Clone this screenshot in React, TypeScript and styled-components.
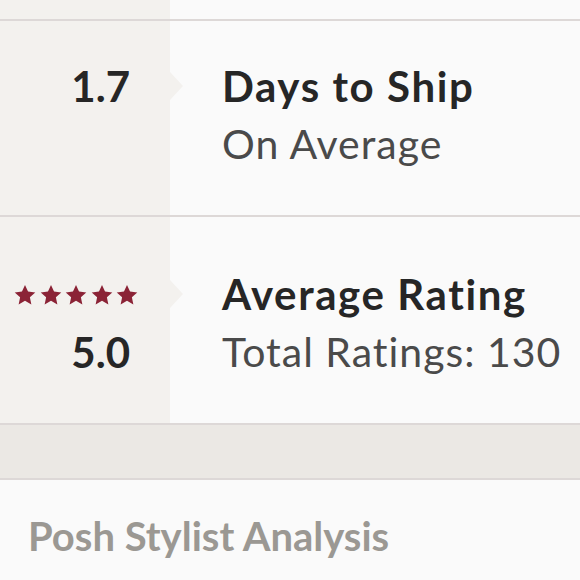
import React from 'react'
import styled, { createGlobalStyle } from 'styled-components'

const GlobalStyle = createGlobalStyle`
  html, body {
    margin: 0;
    padding: 0;
    background: #fafafa;
    font-family: Lato, "Open Sans", sans-serif;
  }
`

const Page = styled.div`
  width: 580px;
  height: 580px;
  overflow: hidden;
  background: #fafafa;
`

const Row = styled.div<{ $top: number; $bottom: number }>`
  display: grid;
  grid-template-columns: 170px 1fr;
  border-bottom: 2px solid #ddd8d7;
  .row__left {
    background: #f3f1ee;
    padding: ${(p) => p.$top}px 40px ${(p) => p.$bottom}px 0;
    display: flex;
    flex-direction: column;
    align-items: flex-end;
  }
  .row__right {
    padding: ${(p) => p.$top}px 0 ${(p) => p.$bottom}px 52px;
  }
`

const Tail = styled.div`
  display: grid;
  grid-template-columns: 170px 1fr;
  height: 19px;
  border-bottom: 2px solid #ddd8d7;
  > div:first-child {
    background: #f3f1ee;
  }
`

const Line = styled.div`
  line-height: 58px;
  height: 58px;
  white-space: nowrap;
`

const Value = styled(Line)`
  font-size: 42px;
  font-weight: 700;
  color: #262626;
`

const Heading = styled(Line)`
  position: relative;
  font-size: 42px;
  font-weight: 700;
  letter-spacing: 1.6px;
  color: #262626;
  &::before {
    content: '';
    position: absolute;
    left: -52px;
    top: 50%;
    transform: translateY(-50%);
    border-top: 14px solid transparent;
    border-bottom: 14px solid transparent;
    border-left: 13px solid #f3f1ee;
  }
`

const Sub = styled(Line)`
  font-size: 41px;
  letter-spacing: 1px;
  color: #4a4a4a;
`

const Stars = styled.div`
  display: flex;
  gap: 3.5px;
  height: 58px;
  align-items: center;
  margin-right: -8px;
  padding-top: 2px;
  box-sizing: border-box;
`

const Band = styled.div`
  height: 53px;
  background: #ebe8e4;
  border-bottom: 2px solid #ddd8d7;
`

const Section = styled.div`
  padding: 27px 0 0 28px;
`

const SectionTitle = styled.h2`
  margin: 0;
  font-size: 40px;
  line-height: 58px;
  font-weight: 700;
  color: #9b9893;
`

const Star = () => (
  <svg width="22" height="22" viewBox="0 0 24 24">
    <polygon
      points="12,1 15.29,8.27 23.22,9.15 17.33,14.53 18.94,22.35 12,18.4 5.06,22.35 6.67,14.53 0.78,9.15 8.71,8.27"
      fill="#8b2336"
    />
  </svg>
)

const App = () => {
  return (
    <Page>
      <GlobalStyle />
      <Tail>
        <div />
        <div />
      </Tail>
      <Row $top={36} $bottom={42}>
        <div className="row__left">
          <Value>1.7</Value>
        </div>
        <div className="row__right">
          <Heading>Days to Ship</Heading>
          <Sub>On Average</Sub>
        </div>
      </Row>
      <Row $top={48} $bottom={42}>
        <div className="row__left">
          <Stars>
            {[0, 1, 2, 3, 4].map((i) => (
              <Star key={i} />
            ))}
          </Stars>
          <Value>5.0</Value>
        </div>
        <div className="row__right">
          <Heading>Average Rating</Heading>
          <Sub>Total Ratings: 130</Sub>
        </div>
      </Row>
      <Band />
      <Section>
        <SectionTitle>Posh Stylist Analysis</SectionTitle>
      </Section>
    </Page>
  )
}

export default App
